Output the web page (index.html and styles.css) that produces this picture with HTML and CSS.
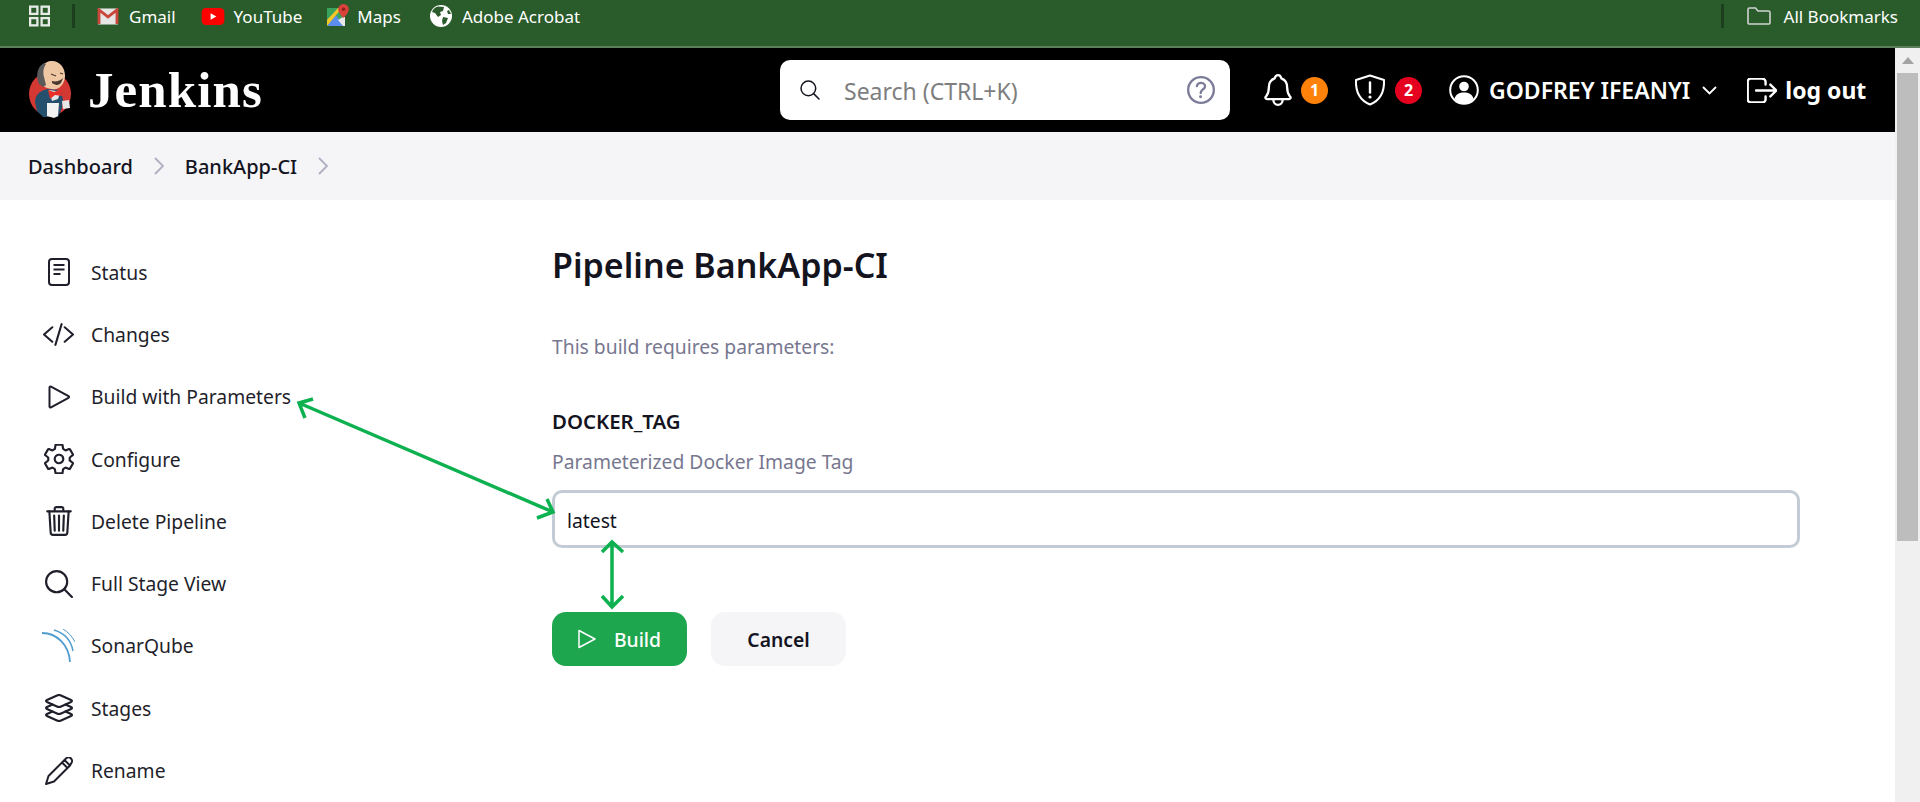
FILE: index.html
```html
<!DOCTYPE html>
<html lang="en">

<head>
  <meta charset="UTF-8">
  <title>Pipeline BankApp-CI - Jenkins</title>
  <link rel="stylesheet" href="styles.css">
</head>

<body>
  <!-- browser bookmarks bar -->
  <div class="bookmarks">
    <svg class="apps" viewBox="0 0 22 22">
      <rect x="1.2" y="1.2" width="7.6" height="7.6" />
      <rect x="13.2" y="1.2" width="7.6" height="7.6" />
      <rect x="1.2" y="13.2" width="7.6" height="7.6" />
      <rect x="13.2" y="13.2" width="7.6" height="7.6" />
    </svg>
    <span class="bar-sep"></span>
    <a class="mark">
      <svg class="mark-ico gmail" viewBox="0 0 22 18">
        <rect x="0.5" y="0.5" width="21" height="17" fill="#e6e6e6" />
        <path d="M1.5 17V2l9.5 7.5L20.5 2v15" fill="none" stroke="#c9473a" stroke-width="3" />
      </svg>
      Gmail
    </a>
    <a class="mark">
      <svg class="mark-ico yt" viewBox="0 0 24 18">
        <rect width="24" height="18" rx="4.5" fill="#f00" />
        <path d="M9.5 5.5v7l6-3.500z" fill="#fff" />
      </svg>
      YouTube
    </a>
    <a class="mark mark-maps">
      <svg class="mark-ico maps" viewBox="0 0 22 22">
        <path d="M0 4h15v18H0z" fill="#3aa35c" />
        <path d="M0 22l9-11 7 11z" fill="#5b8def" />
        <path d="M0 22V16L11 4h4L0 22z" fill="#f3c728" />
        <path d="M16 22l-5-6 5-3 2 0v9z" fill="#e8e8e8" />
        <path d="M16.500 0a5.300 5.300 0 0 0-5.300 5.300c0 3.700 5.300 8.700 5.300 8.700s5.300-5 5.300-8.700A5.300 5.300 0 0 0 16.500 0z" fill="#d9423a" />
        <circle cx="16.500" cy="5.300" r="1.800" fill="#8f241e" />
      </svg>
      Maps
    </a>
    <a class="mark">
      <svg class="mark-ico globe" viewBox="0 0 22 22">
        <circle cx="11" cy="11" r="11" fill="#fff" />
        <path d="M8 1.500l6 .5-1 4-3 1 1 3-3 2-3-4-3-1c1-3 3-4.500 6-5.500zM13 12l5 1-2 5-3 2-1-4zM19 5l2 4-3 0-1-3z" fill="#2a5c2b" />
      </svg>
      Adobe Acrobat
    </a>
    <span class="bar-sep bar-sep-right"></span>
    <a class="mark">
      <svg class="mark-ico folder" viewBox="0 0 24 18">
        <path d="M1 16V2.500A1.500 1.500 0 0 1 2.500 1h6l2.500 3h10.500A1.500 1.500 0 0 1 23 5.500V16a1 1 0 0 1-1 1H2a1 1 0 0 1-1-1z" fill="none" stroke="#cfd3cf" stroke-width="1.600" />
      </svg>
      All Bookmarks
    </a>
  </div>

  <div class="frame">
    <div class="page">
      <header class="topbar">
        <a class="brand">
          <svg class="butler" viewBox="0 0 42 60">
            <ellipse cx="21" cy="34" rx="21" ry="22" fill="#d33833" />
            <path d="M6 42c0-6 4-11 12-13l14 1 2 10-1 8-4 9H14l-6-6z" fill="#24506e" />
            <path d="M20 30l7 1 5-1-3 9-6 2z" fill="#e6e6e6" />
            <path d="M19 30l6 2 7-3 1 7-7-1-5 4z" fill="#e8302a" />
            <path d="M10 20C8 9 15 1 23 1c8 0 13 7 13 15 0 6-4 12-9 13-7 1-14-2-17-9z" fill="#efc7a3" />
            <path d="M10 24C6 15 9 6 15 3l2 1c-3 4-3 9-2 13l2 8-3 2z" fill="#5a5a5a" />
            <path d="M23 21c4 1 8 0 11-3l-2 5c-3 3-6 2-9 0z" fill="#49392f" />
            <path d="M22 14l5 2M31 13l3 1" stroke="#49392f" stroke-width="1.200" />
            <path d="M18 43h12l-1 13-4 2-7-2z" fill="#f2f2f2" />
            <path d="M33 41l7-1 1 8-7 1z" fill="#e8e8e8" />
          </svg>
          <span class="brand-name">Jenkins</span>
        </a>

        <div class="search">
          <svg class="search-ico" viewBox="0 0 512 512">
            <path class="ln" d="M221.090 64a157.090 157.090 0 1 0 157.090 157.090A157.100 157.100 0 0 0 221.090 64z" />
            <path class="ln" d="M338.290 338.290L448 448" />
          </svg>
          <span class="search-text">Search (CTRL+K)</span>
          <svg class="help-ico" viewBox="64 64 384 384">
            <path class="ln" d="M256 80a176 176 0 1 0 176 176A176 176 0 0 0 256 80z" />
            <path class="ln" d="M200 202.290s.84-17.500 19.570-32.570C230.680 160.770 244 158.180 256 158c10.930-.14 20.690 1.670 26.530 4.450 10 4.760 29.470 16.380 29.470 41.090 0 26-17 37.810-36.370 50.800S252 278 252 296" />
            <circle cx="250" cy="348" r="20" fill="currentColor" />
          </svg>
        </div>

        <div class="actions">
          <span class="action">
            <svg class="bell" viewBox="64 32 384 448">
              <path class="ln" d="M427.680 351.430C402 320 383.870 304 383.870 217.350 383.870 138 343.350 109.730 310 96c-4.430-1.820-8.600-6-9.950-10.550C294.200 65.540 277.800 48 256 48s-38.210 17.550-44 37.470c-1.350 4.600-5.520 8.710-9.950 10.530-33.390 13.750-73.870 41.920-73.870 121.350C128.130 304 110 320 84.320 351.430 73.680 364.450 83 384 101.610 384h308.880c18.510 0 27.770-19.610 17.190-32.570z" />
              <path class="ln" d="M320 384v16a64 64 0 0 1-128 0v-16" />
            </svg>
            <span class="badge badge-orange">1</span>
          </span>
          <span class="action action-shield">
            <svg class="shield" viewBox="0 0 32 32">
              <path d="M16 1.500l14 4.500c.5 11-3 20-14 24.500C5 26 1.500 17 2 6z" fill="none" stroke="currentColor" stroke-width="2" stroke-linejoin="round" />
              <path d="M16 8.500v10" stroke="currentColor" stroke-width="2.400" stroke-linecap="round" />
              <circle cx="16" cy="23" r="1.600" fill="currentColor" />
            </svg>
            <span class="badge badge-red">2</span>
          </span>
          <span class="user">
            <svg class="user-ico" viewBox="0 0 30 30">
              <circle cx="15" cy="15" r="13.800" fill="none" stroke="currentColor" stroke-width="2" />
              <circle cx="15" cy="11.500" r="4.800" fill="currentColor" />
              <path d="M5.500 24c1-5 5-6.500 9.500-6.500s8.500 1.500 9.500 6.500c-2.500 2.800-6 4.500-9.500 4.500s-7-1.700-9.500-4.500z" fill="currentColor" />
            </svg>
            <span class="user-name">GODFREY IFEANYI</span>
            <svg class="user-caret" viewBox="0 0 15 9">
              <path d="M1 1l6.500 6.500L14 1" fill="none" stroke="currentColor" stroke-width="1.800" />
            </svg>
          </span>
          <a class="logout">
            <svg class="logout-ico" viewBox="56 88 400 336">
              <path class="ln" d="M304 336v40a40 40 0 0 1-40 40H104a40 40 0 0 1-40-40V136a40 40 0 0 1 40-40h152c22.090 0 48 17.910 48 40v40" />
              <path class="ln" d="M368 336l80-80-80-80M176 256h256" />
            </svg>
            log out
          </a>
        </div>
      </header>

      <nav class="crumbs">
        <a>Dashboard</a>
        <svg class="crumb-arrow" viewBox="0 0 10 18"><path d="M1 1l8 8-8 8" /></svg>
        <a>BankApp-CI</a>
        <svg class="crumb-arrow" viewBox="0 0 10 18"><path d="M1 1l8 8-8 8" /></svg>
      </nav>

      <div class="content">
        <aside class="side">
          <a class="task">
            <span class="task-ico">
              <svg class="i-status" viewBox="0 0 22 28">
                <rect x="1" y="1" width="20" height="26" rx="3" fill="none" stroke="currentColor" stroke-width="2" />
                <path d="M5.500 7h11M5.500 11.500h11M5.500 16h7" stroke="currentColor" stroke-width="2" />
              </svg>
            </span>
            Status
          </a>
          <a class="task">
            <span class="task-ico">
              <svg class="i-code" viewBox="16 80 480 352">
                <path class="ln" d="M160 368L32 256l128-112M352 368l128-112-128-112M304 96l-96 320" />
              </svg>
            </span>
            Changes
          </a>
          <a class="task">
            <span class="task-ico">
              <svg class="i-play" viewBox="0 0 22 24">
                <path d="M1.500 2.500v19c0 .8.800 1.300 1.500.9l17.500-9.600c.7-.4.700-1.300 0-1.700L3 1.600c-.7-.4-1.500.1-1.500.9z" fill="none" stroke="currentColor" stroke-width="2" />
              </svg>
            </span>
            Build with Parameters
          </a>
          <a class="task">
            <span class="task-ico">
              <svg class="i-gear" viewBox="32 32 448 448">
                <path class="ln" d="M262.290 192.310a64 64 0 1 0 57.400 57.400 64.130 64.130 0 0 0-57.400-57.400zM416.390 256a154.340 154.340 0 0 1-1.530 20.790l45.210 35.460a10.810 10.810 0 0 1 2.450 13.750l-42.770 74a10.810 10.810 0 0 1-13.140 4.590l-44.900-18.080a16.110 16.110 0 0 0-15.170 1.750A164.480 164.480 0 0 1 325 400.800a15.940 15.940 0 0 0-8.820 12.140l-6.730 47.890a11.080 11.080 0 0 1-10.680 9.170h-85.540a11.110 11.110 0 0 1-10.690-8.870l-6.720-47.820a16.070 16.070 0 0 0-9-12.220 155.300 155.300 0 0 1-21.460-12.570 16 16 0 0 0-15.110-1.710l-44.890 18.070a10.810 10.810 0 0 1-13.140-4.580l-42.770-74a10.800 10.800 0 0 1 2.450-13.750l38.210-30a16.050 16.050 0 0 0 6-14.080c-.36-4.170-.58-8.330-.58-12.500s.21-8.270.58-12.350a16 16 0 0 0-6.070-13.940l-38.190-30A10.810 10.810 0 0 1 49.480 186l42.770-74a10.810 10.810 0 0 1 13.140-4.590l44.900 18.080a16.110 16.110 0 0 0 15.170-1.750A164.480 164.480 0 0 1 187 111.200a15.940 15.940 0 0 0 8.820-12.140l6.730-47.890A11.080 11.080 0 0 1 213.230 42h85.540a11.110 11.110 0 0 1 10.690 8.870l6.720 47.820a16.070 16.070 0 0 0 9 12.220 155.300 155.300 0 0 1 21.460 12.570 16 16 0 0 0 15.110 1.710l44.890-18.070a10.810 10.810 0 0 1 13.140 4.580l42.770 74a10.800 10.800 0 0 1-2.450 13.750l-38.210 30a16.050 16.050 0 0 0-6.050 14.080c.33 4.140.55 8.300.55 12.470z" />
              </svg>
            </span>
            Configure
          </a>
          <a class="task">
            <span class="task-ico">
              <svg class="i-trash" viewBox="64 32 384 448">
                <path class="ln" d="M112 112l20 320c.95 18.490 14.400 32 32 32h184c17.670 0 30.870-13.510 32-32l20-320" />
                <path class="ln" d="M80 112h352M192 112V72a23.930 23.930 0 0 1 24-24h80a23.930 23.930 0 0 1 24 24v40M256 176v224M184 176l8 224M328 176l-8 224" />
              </svg>
            </span>
            Delete Pipeline
          </a>
          <a class="task">
            <span class="task-ico">
              <svg class="i-search" viewBox="48 48 416 416">
                <path class="ln" d="M221.090 64a157.090 157.090 0 1 0 157.090 157.090A157.100 157.100 0 0 0 221.090 64z" />
                <path class="ln" d="M338.290 338.290L448 448" />
              </svg>
            </span>
            Full Stage View
          </a>
          <a class="task">
            <span class="task-ico">
              <svg class="i-sonar" viewBox="0 0 33 33">
                <path d="M0 4c15 0 27 12 28 29" fill="none" stroke="#4e9bcd" stroke-width="1.800" />
                <path d="M12 1c10 3 17 10 19 21" fill="none" stroke="#4e9bcd" stroke-width="1.400" />
                <path d="M21 0c5 3 9 7 12 13" fill="none" stroke="#4e9bcd" stroke-width="1" />
              </svg>
            </span>
            SonarQube
          </a>
          <a class="task">
            <span class="task-ico">
              <svg class="i-layers" viewBox="48 48 416 416">
                <path class="ln" d="M434.800 137.650l-149.360-68.100c-16.190-7.400-42.690-7.400-58.880 0L77.300 137.650c-17.600 8-17.600 21.090 0 29.090l148 67.500c16.890 7.700 44.690 7.700 61.580 0l148-67.500c17.520-8 17.520-21.100-.08-29.090z" />
                <path class="ln" d="M160 308.520l-82.700 37.110c-17.600 8-17.600 21.100 0 29.100l148 67.500c16.890 7.690 44.690 7.690 61.580 0l148-67.500c17.600-8 17.600-21.100 0-29.100l-79.940-38.470" />
                <path class="ln" d="M160 204.480l-82.800 37.160c-17.600 8-17.600 21.100 0 29.100l148 67.490c16.890 7.700 44.690 7.700 61.580 0l148-67.490c17.700-8 17.700-21.100.1-29.100L352 204.480" />
              </svg>
            </span>
            Stages
          </a>
          <a class="task">
            <span class="task-ico">
              <svg class="i-pencil" viewBox="0 0 28 28">
                <path d="M1 27l2.500-8L19.500 3l5.500 5.500L9 24.500z" fill="none" stroke="currentColor" stroke-width="2" stroke-linejoin="round" />
                <path d="M19.500 3l1.500-1.500a3.500 3.500 0 0 1 5 5L25 8.500" fill="none" stroke="currentColor" stroke-width="2" />
                <path d="M17 5.500L22.500 11" stroke="currentColor" stroke-width="2" />
              </svg>
            </span>
            Rename
          </a>
        </aside>

        <main class="main">
          <h1>Pipeline BankApp-CI</h1>
          <p class="intro">This build requires parameters:</p>
          <div class="param-name">DOCKER_TAG</div>
          <div class="param-desc">Parameterized Docker Image Tag</div>
          <input class="param-input" type="text" value="latest">
          <div class="buttons">
            <button class="btn btn-build">
              <svg class="btn-ico" viewBox="0 0 18 20">
                <path d="M1 1.500v17l16-8.500z" fill="none" stroke="currentColor" stroke-width="1.500" stroke-linejoin="round" />
              </svg>
              Build
            </button>
            <button class="btn btn-cancel">Cancel</button>
          </div>
        </main>
      </div>

      <!-- annotation arrows drawn over the screenshot -->
      <svg class="arrows" viewBox="0 0 1895 754">
        <path d="M299 355L553 464M313 351L299 355L305 370M547 451L553 464L537 470" />
        <path d="M612 494V559M602 504L612 494L623 504M602 548L612 559L623 548" />
      </svg>
    </div>

    <div class="scrollbar">
      <span class="scroll-up"></span>
      <span class="scroll-thumb"></span>
    </div>
  </div>
</body>

</html>
```

FILE: styles.css
```css
* {
  box-sizing: border-box;
}

html,
body {
  margin: 0;
  height: 100%;
  overflow: hidden;
}

body {
  font-family: "Noto Sans", "Open Sans", sans-serif;
  color: #14141f;
  background: #fff;
}

svg {
  display: block;
  flex: none;
}

.ln {
  fill: none;
  stroke: currentColor;
  stroke-width: 32;
  stroke-linecap: round;
  stroke-linejoin: round;
}

/* bookmarks bar */
.bookmarks {
  height: 48px;
  display: flex;
  align-items: flex-start;
  padding-left: 29px;
  background: #2a5c2b;
  border-bottom: 2px solid #5b7f5a;
  color: #fff;
  font-size: 17px;
}

.apps {
  width: 21px;
  height: 22px;
  margin-top: 5px;
}

.apps rect {
  fill: none;
  stroke: #e8ece8;
  stroke-width: 2.400;
}

.bar-sep {
  width: 3px;
  height: 24px;
  margin: 4px 22px 0 22px;
  background: #1c3f1d;
}

.bar-sep-right {
  margin-left: auto;
  margin-right: 23px;
}

.mark {
  display: flex;
  align-items: center;
  height: 32px;
  margin-right: 25px;
  white-space: nowrap;
}

.mark:last-child {
  margin-right: 22px;
}

.mark-maps {
  margin-right: 29px;
}

.mark-ico {
  margin-right: 10px;
}

.gmail {
  width: 22px;
  height: 17px;
}

.yt {
  width: 24px;
  height: 17px;
  margin-right: 9px;
}

.maps {
  width: 22px;
  height: 22px;
  margin-top: -2px;
  margin-right: 8px;
}

.globe {
  width: 22px;
  height: 22px;
}

.folder {
  width: 24px;
  height: 18px;
  margin-right: 13px;
}

/* main frame below the browser bar */
.frame {
  display: flex;
  height: 754px;
}

.page {
  position: relative;
  flex: 1;
  min-width: 0;
  overflow: hidden;
}

.scrollbar {
  width: 25px;
  display: flex;
  flex-direction: column;
  align-items: center;
  background: #f0f0f0;
}

.scroll-up {
  width: 0;
  height: 0;
  margin-top: 9px;
  border-left: 6px solid transparent;
  border-right: 6px solid transparent;
  border-bottom: 7px solid #a3a3a3;
}

.scroll-thumb {
  width: 21px;
  height: 468px;
  margin-top: 9px;
  background: #bdbdbd;
}

/* jenkins header */
.topbar {
  height: 84px;
  display: flex;
  align-items: center;
  padding-left: 29px;
  background: #000;
  color: #fff;
}

.brand {
  display: flex;
  align-items: center;
  width: 751px;
}

.butler {
  width: 42px;
  height: 60px;
}

.brand-name {
  margin-left: 17px;
  font-family: "Liberation Serif", serif;
  font-weight: 700;
  font-size: 51px;
  letter-spacing: 1.100px;
  line-height: 1;
}

.search {
  width: 450px;
  height: 60px;
  display: flex;
  align-items: center;
  padding: 0 15px 0 20px;
  background: #fff;
  border-radius: 10px;
  color: #14141f;
}

.search-ico {
  width: 24px;
  height: 24px;
  margin-left: -2px;
}

.search-text {
  flex: 1;
  margin-left: 22px;
  padding-top: 1px;
  color: #7e7e7e;
  font-size: 23px;
}

.help-ico {
  width: 28px;
  height: 28px;
  color: #7c7c99;
}

.actions {
  display: flex;
  align-items: center;
}

.action {
  display: flex;
  align-items: center;
  margin-left: 34px;
}

.action-shield {
  margin-left: 26px;
}

.bell {
  width: 28px;
  height: 32px;
}

.shield {
  width: 32px;
  height: 32px;
}

.badge {
  width: 27px;
  height: 27px;
  margin-left: 9px;
  display: flex;
  align-items: center;
  justify-content: center;
  border-radius: 50%;
  font-size: 16px;
  font-weight: 700;
  color: #fff;
}

.badge-orange {
  background: #fe820a;
}

.badge-red {
  background: #e6001f;
}

.user {
  display: flex;
  align-items: center;
  margin-left: 27px;
}

.user-ico {
  width: 30px;
  height: 30px;
}

.user-name {
  margin-left: 10px;
  font-size: 23px;
  font-weight: 600;
  white-space: nowrap;
}

.user-caret {
  width: 15px;
  height: 9px;
  margin-left: 12px;
}

.logout {
  display: flex;
  align-items: center;
  margin-left: 30px;
  font-size: 23px;
  font-weight: 700;
}

.logout-ico {
  width: 30px;
  height: 25px;
  margin-right: 8px;
}

/* breadcrumbs */
.crumbs {
  height: 68px;
  display: flex;
  align-items: center;
  padding-left: 28px;
  background: #f5f5f7;
  font-size: 20px;
  font-weight: 500;
}

.crumb-arrow {
  width: 10px;
  height: 18px;
  margin: 0 21px;
}

.crumb-arrow path {
  fill: none;
  stroke: #aeaec2;
  stroke-width: 1.800;
}

/* page body */
.content {
  display: flex;
}

.side {
  width: 552px;
  flex: none;
  padding: 41px 0 0 42px;
}

.task {
  display: flex;
  align-items: center;
  height: 62.300px;
  font-size: 19.300px;
  color: #1f1f2b;
  white-space: nowrap;
}

.task-ico {
  width: 33px;
  margin-right: 16px;
  display: flex;
  justify-content: center;
}

.i-status {
  width: 22px;
  height: 28px;
}

.i-code {
  width: 31px;
  height: 23px;
}

.i-play {
  width: 22px;
  height: 24px;
}

.i-gear {
  width: 30px;
  height: 30px;
}

.i-trash {
  width: 26px;
  height: 30px;
}

.i-search {
  width: 28px;
  height: 28px;
}

.i-sonar {
  width: 33px;
  height: 33px;
}

.i-layers {
  width: 28px;
  height: 28px;
}

.i-pencil {
  width: 28px;
  height: 28px;
}

.main {
  flex: none;
  width: 1248px;
}

h1 {
  margin: 40px 0 0;
  font-size: 34px;
  line-height: 50px;
  font-weight: 600;
}

.intro {
  margin: 44px 0 0;
  font-size: 19.300px;
  line-height: 26px;
  color: #77778f;
}

.param-name {
  margin-top: 48px;
  font-size: 20.400px;
  line-height: 26px;
  font-weight: 600;
}

.param-desc {
  margin-top: 15px;
  font-size: 19.300px;
  line-height: 26px;
  color: #77778f;
}

.param-input {
  display: block;
  width: 100%;
  height: 58px;
  margin-top: 15px;
  padding: 2px 12px 0;
  border: 3px solid #c3ccd4;
  border-radius: 10px;
  outline: none;
  font: inherit;
  font-size: 19.300px;
  color: #14141f;
}

.buttons {
  display: flex;
  gap: 24px;
  margin-top: 64px;
}

.btn {
  height: 54px;
  display: flex;
  align-items: center;
  justify-content: center;
  border: none;
  border-radius: 14px;
  font: inherit;
  font-size: 19.300px;
  font-weight: 500;
}

.btn-build {
  width: 135px;
  background: #1ea64e;
  color: #fff;
}

.btn-ico {
  width: 18px;
  height: 20px;
  margin-right: 18px;
}

.btn-cancel {
  width: 135px;
  background: #f5f5f7;
  color: #14141f;
  font-weight: 600;
}

/* green arrows */
.arrows {
  position: absolute;
  top: 0;
  left: 0;
  width: 1895px;
  height: 754px;
  pointer-events: none;
}

.arrows path {
  fill: none;
  stroke: #0eb14f;
  stroke-width: 3.500;
}
```
